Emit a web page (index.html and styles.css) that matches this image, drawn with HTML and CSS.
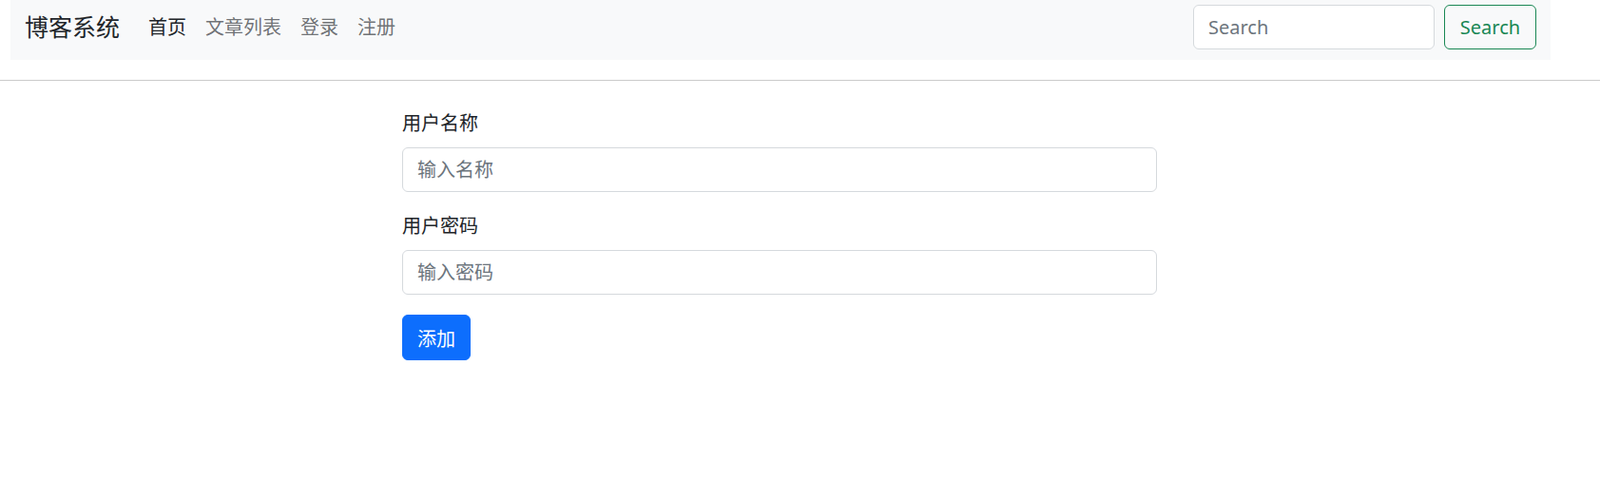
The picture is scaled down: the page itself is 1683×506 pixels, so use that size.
FILE: index.html
```html
<!DOCTYPE html>
<html lang="zh-CN">
<head>
<meta charset="utf-8">
<title>博客系统</title>
<link rel="stylesheet" href="styles.css">
</head>
<body>
<nav class="navbar">
  <a class="brand" href="#">博客系统</a>
  <ul class="nav-links">
    <li><a class="nav-link active" href="#">首页</a></li>
    <li><a class="nav-link" href="#">文章列表</a></li>
    <li><a class="nav-link" href="#">登录</a></li>
    <li><a class="nav-link" href="#">注册</a></li>
  </ul>
  <form class="search-form">
    <input class="search-input" type="search" placeholder="Search">
    <button class="search-btn" type="button">Search</button>
  </form>
</nav>
<hr class="divider">
<main class="main">
  <form class="user-form">
    <div class="field">
      <label class="field-label">用户名称</label>
      <input class="field-input" type="text" placeholder="输入名称">
    </div>
    <div class="field">
      <label class="field-label">用户密码</label>
      <input class="field-input" type="password" placeholder="输入密码">
    </div>
    <button class="submit-btn" type="button">添加</button>
  </form>
</main>
</body>
</html>
```

FILE: styles.css
```css
* {
  box-sizing: border-box;
}

body {
  margin: 0;
  font-family: "Noto Sans", "Noto Sans CJK SC", sans-serif;
  font-size: 20px;
  color: #212529;
  background: #fff;
}

.navbar {
  display: flex;
  align-items: center;
  margin-left: 11px;
  width: 1620px;
  height: 63px;
  padding: 5px 15px 11px;
  background: #f8f9fa;
}

.brand {
  font-size: 25px;
  color: #212529;
  text-decoration: none;
  margin-right: 20px;
  line-height: 1.5;
}

.nav-links {
  display: flex;
  list-style: none;
  margin: 0;
  padding: 0;
}

.nav-link {
  display: block;
  padding: 0 10px;
  font-size: 20px;
  line-height: 1.5;
  color: rgba(33, 37, 41, 0.65);
  text-decoration: none;
}

.nav-link.active {
  color: #212529;
}

.search-form {
  display: flex;
  gap: 10px;
  margin: 0 0 0 auto;
}

.search-input {
  width: 254px;
  height: 47px;
  padding: 0 15px;
  font: inherit;
  font-size: 20px;
  color: #212529;
  background: #fff;
  border: 1px solid #d5d9dd;
  border-radius: 6px;
  outline: none;
}

.search-input::placeholder,
.field-input::placeholder {
  color: #6c757d;
}

.search-btn {
  width: 97px;
  height: 47px;
  padding: 0;
  font: inherit;
  font-size: 20px;
  color: #198754;
  background: transparent;
  border: 1px solid #198754;
  border-radius: 6px;
}

.divider {
  margin: 21px 0 0;
  border: 0;
  border-top: 1px solid #cbcbcb;
}

.main {
  padding: 30px 0 0 423px;
}

.user-form {
  width: 794px;
}

.field {
  margin-bottom: 21px;
}

.field-label {
  display: block;
  font-size: 20px;
  line-height: 30px;
  margin-bottom: 10px;
}

.field-input {
  display: block;
  width: 100%;
  height: 47px;
  padding: 0 15px;
  font: inherit;
  font-size: 20px;
  color: #212529;
  background: #fff;
  border: 1px solid #d5d9dd;
  border-radius: 6px;
  outline: none;
}

.submit-btn {
  height: 48px;
  padding: 0 15px;
  font: inherit;
  font-size: 20px;
  color: #fff;
  background: #0d6efd;
  border: 1px solid #0d6efd;
  border-radius: 6px;
}
```
